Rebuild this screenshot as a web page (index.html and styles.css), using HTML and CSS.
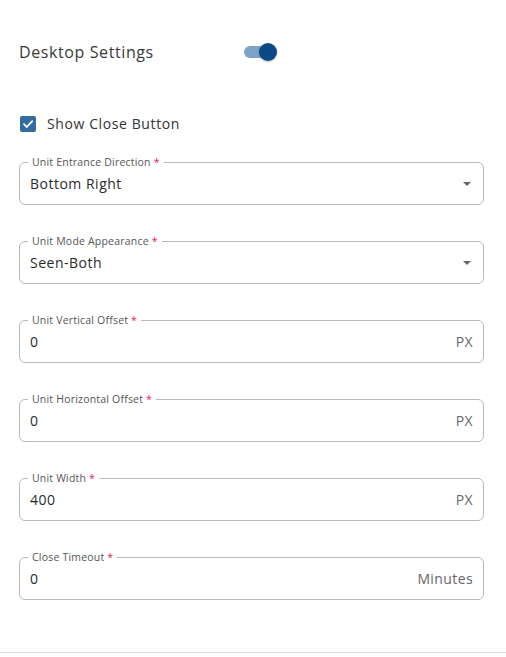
FILE: index.html
```html
<!DOCTYPE html>
<html lang="en">
<head>
    <meta charset="UTF-8">
    <meta name="viewport" content="width=device-width, initial-scale=1.0">
    <title>Desktop Settings</title>
    <link rel="stylesheet" href="styles.css">
</head>
<body>
    <div class="panel">
        <div class="header-row">
            <span class="header-title">Desktop Settings</span>
            <span class="toggle"><span class="toggle-knob"></span></span>
        </div>

        <label class="check-row">
            <span class="checkbox">
                <svg width="12" height="12" viewBox="0 0 12 12"><path d="M2 6.2 L4.8 9 L10.2 3.2" fill="none" stroke="#fff" stroke-width="1.8" stroke-linecap="round" stroke-linejoin="round"/></svg>
            </span>
            <span>Show Close Button</span>
        </label>

        <div class="fields">
            <div class="field">
                <span class="field-label">Unit Entrance Direction <span class="req">*</span></span>
                <span class="field-value">Bottom Right</span>
                <span class="arrow"></span>
            </div>
            <div class="field">
                <span class="field-label">Unit Mode Appearance <span class="req">*</span></span>
                <span class="field-value">Seen-Both</span>
                <span class="arrow"></span>
            </div>
            <div class="field">
                <span class="field-label">Unit Vertical Offset <span class="req">*</span></span>
                <span class="field-value">0</span>
                <span class="suffix">PX</span>
            </div>
            <div class="field">
                <span class="field-label">Unit Horizontal Offset <span class="req">*</span></span>
                <span class="field-value">0</span>
                <span class="suffix">PX</span>
            </div>
            <div class="field">
                <span class="field-label">Unit Width <span class="req">*</span></span>
                <span class="field-value">400</span>
                <span class="suffix">PX</span>
            </div>
            <div class="field">
                <span class="field-label">Close Timeout <span class="req">*</span></span>
                <span class="field-value">0</span>
                <span class="suffix">Minutes</span>
            </div>
        </div>
    </div>
</body>
</html>
```

FILE: styles.css
```css
body {
    margin: 0;
    padding: 0;
    background: #fff;
    font-family: 'Open Sans', sans-serif;
    color: #333;
}
.panel {
    width: 506px;
    height: 653px;
    box-sizing: border-box;
    padding: 40px 22px 0 19px;
    border-bottom: 1px solid #dcdcdc;
}
.header-row {
    display: flex;
    align-items: center;
    height: 24px;
}
.header-title {
    width: 225px;
    font-size: 16px;
    letter-spacing: 0.6px;
    color: #3a3a3a;
}
.toggle {
    position: relative;
    width: 28px;
    height: 12px;
    border-radius: 6px;
    background: #7ea2c6;
}
.toggle-knob {
    position: absolute;
    right: -5px;
    top: -3px;
    width: 18px;
    height: 18px;
    border-radius: 50%;
    background: #0b4a85;
    box-shadow: 0 1px 2px rgba(0, 0, 0, 0.25);
}
.check-row {
    display: flex;
    align-items: center;
    gap: 11px;
    margin-top: 50px;
    padding-left: 1px;
    font-size: 14px;
    letter-spacing: 0.6px;
    color: #333;
}
.checkbox {
    display: flex;
    align-items: center;
    justify-content: center;
    width: 16px;
    height: 16px;
    border-radius: 2px;
    background: #336c9f;
}
.fields {
    display: flex;
    flex-direction: column;
    gap: 36px;
    margin-top: 29px;
}
.field {
    position: relative;
    display: flex;
    align-items: center;
    height: 43px;
    box-sizing: border-box;
    padding: 0 10px;
    border: 1px solid #b9b9b9;
    border-radius: 6px;
}
.field-label {
    position: absolute;
    top: -8px;
    left: 8px;
    padding: 0 4px;
    background: #fff;
    font-size: 10.5px;
    line-height: 14px;
    letter-spacing: 0.2px;
    color: #555;
}
.req {
    color: #e0224e;
}
.field-value {
    flex: 1;
    font-size: 14px;
    letter-spacing: 0.5px;
    color: #2a2a2a;
}
.suffix {
    font-size: 14px;
    letter-spacing: 0.4px;
    color: #666;
}
.arrow {
    width: 0;
    height: 0;
    margin-right: 2px;
    border-left: 4.5px solid transparent;
    border-right: 4.5px solid transparent;
    border-top: 4.5px solid #666;
}
```
